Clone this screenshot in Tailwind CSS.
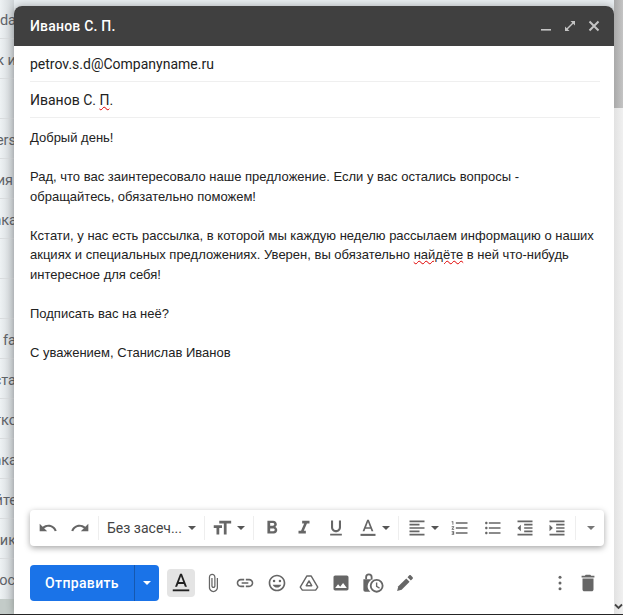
<!DOCTYPE html>
<html lang="ru">
<head>
  <meta charset="UTF-8">
  <title>Новое письмо</title>
  <script src="https://cdn.jsdelivr.net/npm/@tailwindcss/browser@4"></script>
</head>
<body class="w-[623px] h-[615px] overflow-hidden bg-[#e9eef1] font-['Roboto',sans-serif]">
  <div class="flex h-[614px]">

    <!-- Mail list behind the compose window -->
    <div class="w-[14px] h-[614px] flex flex-col overflow-hidden text-[14.5px] text-[#5f6368] bg-gradient-to-r from-[#eef2f4] to-[#cfd4d7]">
      <div class="h-[39px] pt-1 shrink-0 flex items-center justify-end whitespace-nowrap border-b border-[#d9dcde]"><span class="-mr-[2px]">da</span></div>
      <div class="h-10 pt-1 shrink-0 flex items-center justify-end whitespace-nowrap border-b border-[#d9dcde]"><span class="-mr-[2px]">к и</span></div>
      <div class="h-10 pt-1 shrink-0 border-b border-[#d9dcde]"></div>
      <div class="h-10 pt-1 shrink-0 flex items-center justify-end whitespace-nowrap border-b border-[#d9dcde]"><span class="-mr-[2px]">ers</span></div>
      <div class="h-10 pt-1 shrink-0 flex items-center justify-end whitespace-nowrap border-b border-[#d9dcde]"><span class="mr-[1px]">ия</span></div>
      <div class="h-10 pt-1 shrink-0 flex items-center justify-end whitespace-nowrap border-b border-[#d9dcde]"><span class="-mr-[3px]">ака</span></div>
      <div class="h-10 pt-1 shrink-0 border-b border-[#d9dcde]"></div>
      <div class="h-10 pt-1 shrink-0 border-b border-[#d9dcde]"></div>
      <div class="h-10 pt-1 shrink-0 flex items-center justify-end whitespace-nowrap border-b border-[#d9dcde]"><span class="-mr-[2px]">s fa</span></div>
      <div class="h-10 pt-1 shrink-0 flex items-center justify-end whitespace-nowrap border-b border-[#d9dcde]"><span class="-mr-[2px]">ста</span></div>
      <div class="h-10 pt-1 shrink-0 flex items-center justify-end whitespace-nowrap border-b border-[#d9dcde]"><span class="-mr-[3px]">тко</span></div>
      <div class="h-10 pt-1 shrink-0 flex items-center justify-end whitespace-nowrap border-b border-[#d9dcde]"><span class="-mr-[3px]">ака</span></div>
      <div class="h-10 pt-1 shrink-0 flex items-center justify-end whitespace-nowrap border-b border-[#d9dcde]"><span class="-mr-[3px]">йте</span></div>
      <div class="h-10 pt-1 shrink-0 flex items-center justify-end whitespace-nowrap border-b border-[#d9dcde]"><span class="-mr-[2px]">ик</span></div>
      <div class="h-10 pt-1 shrink-0 flex items-center justify-end whitespace-nowrap"><span class="-mr-[1px]">ос</span></div>
      <div class="flex-1 bg-[#c3cbc8]"></div>
    </div>

    <!-- Compose window -->
    <div class="w-[600px] mt-[6px] flex flex-col bg-white rounded-t-lg shadow-[0_0_8px_rgba(0,0,0,0.3)]">
      <div class="h-10 shrink-0 bg-[#404040] rounded-t-lg flex items-center pl-4 pr-3 text-white">
        <span class="font-medium text-[14px] tracking-[0.2px]">Иванов С. П.</span>
        <div class="ml-auto flex items-center gap-2 text-[#c4c4c4]">
          <svg class="w-4 h-4 block" viewBox="0 0 16 16" fill="currentColor"><rect x="3" y="11" width="10" height="1.6"/></svg>
          <svg class="w-4 h-4 block" viewBox="0 0 16 16" fill="currentColor"><path d="M8.5 3H13v4.5zM3 8.5V13h4.5z"/><path d="M4.5 11.5l7-7" stroke="currentColor" stroke-width="1.4"/></svg>
          <svg class="w-4 h-4 block" viewBox="0 0 16 16" fill="none" stroke="currentColor" stroke-width="2"><path d="M3.5 3.5l9 9M12.5 3.5l-9 9"/></svg>
        </div>
      </div>

      <div class="ml-4 mr-[14px] h-[36px] pt-[2px] shrink-0 flex items-center border-b border-[#efefef] text-[14px] text-[#222]">petrov.s.d@Companyname.ru</div>
      <div class="ml-4 mr-[14px] h-[36px] pt-[2px] shrink-0 flex items-center border-b border-[#efefef] text-[14px] text-[#222]">
        <span>Иванов С. <span class="underline decoration-wavy decoration-[#e00000] decoration-1">П</span>.</span>
      </div>

      <div class="flex-1 ml-4 mr-[14px] mt-[10px] font-['Liberation_Sans',sans-serif] text-[13px] leading-[19.5px] text-[#222]">
        <p>Добрый день!</p>
        <p class="mt-[19.5px]">Рад, что вас заинтересовало наше предложение. Если у вас остались вопросы -<br>обращайтесь, обязательно поможем!</p>
        <p class="mt-[19.5px]">Кстати, у нас есть рассылка, в которой мы каждую неделю рассылаем информацию о наших<br>акциях и специальных предложениях. Уверен, вы обязательно <span class="underline decoration-wavy decoration-[#e00000] decoration-1">найдёте</span> в ней что-нибудь<br>интересное для себя!</p>
        <p class="mt-[19.5px]">Подписать вас на неё?</p>
        <p class="mt-[19.5px]">С уважением, Станислав Иванов</p>
      </div>

      <!-- Formatting toolbar -->
      <div class="ml-4 mr-[10px] mb-[19px] h-9 shrink-0 flex items-center bg-white rounded-sm shadow-[0_2px_6px_rgba(0,0,0,0.35)] text-[#666]">
        <svg class="w-5 h-5 ml-[8px]" viewBox="0 0 24 24" fill="currentColor"><path d="M12.5 8c-2.65 0-5.05.99-6.9 2.6L2 7v9h9l-3.62-3.62c1.39-1.16 3.16-1.88 5.12-1.88 3.54 0 6.55 2.31 7.6 5.5l2.37-.78C21.08 11.03 17.15 8 12.5 8z"/></svg>
        <svg class="w-5 h-5 ml-3" viewBox="0 0 24 24" fill="currentColor"><path d="M18.4 10.6C16.55 8.99 14.15 8 11.5 8c-4.65 0-8.58 3.03-9.96 7.22L3.9 16c1.05-3.19 4.05-5.5 7.6-5.5 1.95 0 3.73.72 5.12 1.88L13 16h9V7l-3.6 3.6z"/></svg>
        <div class="w-px h-6 bg-[#eee] ml-2"></div>
        <span class="ml-2 text-[14px] text-[#444] w-[74px] whitespace-nowrap">Без засеч...</span>
        <div class="ml-[7px] w-0 h-0 border-x-[4px] border-x-transparent border-t-[4px] border-t-[#555]"></div>
        <div class="w-px h-6 bg-[#eee] ml-2"></div>
        <svg class="w-[22px] h-[22px] ml-[6px]" viewBox="0 0 24 24" fill="currentColor"><path d="M9 4v3h5v12h3V7h5V4H9zm-6 8h3v7h3v-7h3V9H3v3z"/></svg>
        <div class="ml-[4px] w-0 h-0 border-x-[4px] border-x-transparent border-t-[4px] border-t-[#555]"></div>
        <div class="w-px h-6 bg-[#eee] ml-2"></div>
        <svg class="w-[22px] h-[22px] ml-[7px]" viewBox="0 0 24 24" fill="currentColor"><path d="M15.6 10.79c.97-.67 1.65-1.77 1.65-2.79 0-2.26-1.75-4-4-4H7v14h7.04c2.09 0 3.71-1.7 3.71-3.79 0-1.52-.86-2.82-2.15-3.42zM10 6.5h3c.83 0 1.5.67 1.5 1.5s-.67 1.5-1.5 1.5h-3v-3zm3.5 9H10v-3h3.5c.83 0 1.5.67 1.5 1.5s-.67 1.5-1.5 1.5z"/></svg>
        <svg class="w-[22px] h-[22px] ml-[10px]" viewBox="0 0 24 24" fill="currentColor"><path d="M10 4v3h2.21l-3.42 8H6v3h8v-3h-2.21l3.42-8H18V4z"/></svg>
        <svg class="w-[20px] h-[20px] ml-[11px]" viewBox="0 0 24 24" fill="currentColor"><path d="M12 17c3.31 0 6-2.69 6-6V3h-2.5v8c0 1.93-1.57 3.5-3.5 3.5S8.5 12.93 8.5 11V3H6v8c0 3.31 2.69 6 6 6zm-7 2v2h14v-2H5z"/></svg>
        <svg class="w-[20px] h-[20px] ml-[12px]" viewBox="0 0 24 24" fill="currentColor"><path d="M11 2L5.5 16h2.25l1.12-3h6.25l1.12 3h2.25L13 2h-2zm-1.38 9L12 4.67 14.38 11H9.62z"/><rect x="3" y="19" width="18" height="2.5"/></svg>
        <div class="ml-[4px] w-0 h-0 border-x-[4px] border-x-transparent border-t-[4px] border-t-[#555]"></div>
        <div class="w-px h-6 bg-[#eee] ml-2"></div>
        <svg class="w-[20px] h-[20px] ml-[8px]" viewBox="0 0 24 24" fill="currentColor"><path d="M15 15H3v2h12v-2zm0-8H3v2h12V7zM3 13h18v-2H3v2zm0 8h18v-2H3v2zM3 3v2h18V3H3z"/></svg>
        <div class="ml-[4px] w-0 h-0 border-x-[4px] border-x-transparent border-t-[4px] border-t-[#555]"></div>
        <svg class="w-[20px] h-[20px] ml-[11px]" viewBox="0 0 24 24" fill="currentColor"><path d="M2 17h2v.5H3v1h1v.5H2v1h3v-4H2v1zm1-9h1V4H2v1h1v3zm-1 3h1.8L2 13.1v.9h3v-1H3.2L5 10.9V10H2v1zm5-6v2h14V5H7zm0 14h14v-2H7v2zm0-6h14v-2H7v2z"/></svg>
        <svg class="w-[20px] h-[20px] ml-[13px]" viewBox="0 0 24 24" fill="currentColor"><path d="M4 10.5c-.83 0-1.5.67-1.5 1.5s.67 1.5 1.5 1.5 1.5-.67 1.5-1.5-.67-1.5-1.5-1.5zm0-6c-.83 0-1.5.67-1.5 1.5S3.17 7.5 4 7.5 5.5 6.83 5.5 6 4.83 4.5 4 4.5zm0 12c-.83 0-1.5.68-1.5 1.5s.68 1.5 1.5 1.5 1.5-.68 1.5-1.5-.67-1.5-1.5-1.5zM7 19h14v-2H7v2zm0-6h14v-2H7v2zm0-8v2h14V5H7z"/></svg>
        <svg class="w-[20px] h-[20px] ml-[12px]" viewBox="0 0 24 24" fill="currentColor"><path d="M11 17h10v-2H11v2zm-8-5l4 4V8l-4 4zm0 9h18v-2H3v2zM3 3v2h18V3H3zm8 6h10V7H11v2zm0 4h10v-2H11v2z"/></svg>
        <svg class="w-[20px] h-[20px] ml-[12px]" viewBox="0 0 24 24" fill="currentColor"><path d="M3 21h18v-2H3v2zM3 8v8l4-4-4-4zm8 9h10v-2H11v2zM3 3v2h18V3H3zm8 6h10V7H11v2zm0 4h10v-2H11v2z"/></svg>
        <div class="w-px h-6 bg-[#eee] ml-2"></div>
        <div class="ml-[11px] w-0 h-0 border-x-[4px] border-x-transparent border-t-[4px] border-t-[#777]"></div>
      </div>

      <!-- Bottom actions -->
      <div class="ml-4 mr-[15px] mb-[13px] h-9 shrink-0 flex items-center text-[#666]">
        <div class="w-[129px] h-9 flex bg-[#1a73e8] rounded text-white">
          <span class="w-[104px] flex items-center justify-center font-medium text-[14px] tracking-[0.35px]">Отправить</span>
          <span class="flex-1 border-l border-[#1558b0] flex items-center justify-center">
            <span class="w-0 h-0 border-x-[4px] border-x-transparent border-t-[4px] border-t-white"></span>
          </span>
        </div>
        <div class="ml-2 w-7 h-7 bg-[#e4e4e4] rounded-sm flex items-center justify-center text-[#222]">
          <svg class="w-[22px] h-[22px]" viewBox="0 0 24 24" fill="currentColor"><path d="M11 2L5.5 16h2.25l1.12-3h6.25l1.12 3h2.25L13 2h-2zm-1.38 9L12 4.67 14.38 11H9.62z"/><rect x="3" y="19" width="18" height="2"/></svg>
        </div>
        <svg class="w-[20px] h-[20px] ml-2" viewBox="0 0 24 24" fill="currentColor"><path d="M16.5 6v11.5c0 2.21-1.79 4-4 4s-4-1.79-4-4V5c0-1.38 1.12-2.5 2.5-2.5s2.5 1.12 2.5 2.5v10.5c0 .55-.45 1-1 1s-1-.45-1-1V6H10v9.5c0 1.38 1.12 2.5 2.5 2.5s2.5-1.12 2.5-2.5V5c0-2.21-1.79-4-4-4S7 2.79 7 5v12.5c0 3.04 2.46 5.5 5.5 5.5s5.5-2.46 5.5-5.5V6h-1.5z"/></svg>
        <svg class="w-[20px] h-[20px] ml-3" viewBox="0 0 24 24" fill="currentColor"><path d="M3.9 12c0-1.71 1.39-3.1 3.1-3.1h4V7H7c-2.76 0-5 2.24-5 5s2.24 5 5 5h4v-1.9H7c-1.71 0-3.1-1.39-3.1-3.1zM8 13h8v-2H8v2zm9-6h-4v1.9h4c1.71 0 3.1 1.39 3.1 3.1s-1.39 3.1-3.1 3.1h-4V17h4c2.76 0 5-2.24 5-5s-2.24-5-5-5z"/></svg>
        <svg class="w-[20px] h-[20px] ml-3" viewBox="0 0 24 24" fill="currentColor"><path d="M11.99 2C6.47 2 2 6.48 2 12s4.47 10 9.99 10C17.52 22 22 17.52 22 12S17.52 2 11.99 2zM12 20c-4.42 0-8-3.58-8-8s3.58-8 8-8 8 3.58 8 8-3.58 8-8 8z"/><circle cx="15.5" cy="9.5" r="1.5"/><circle cx="8.5" cy="9.5" r="1.5"/><path d="M12 17.5c2.33 0 4.3-1.46 5.11-3.5H6.89c.81 2.04 2.78 3.5 5.11 3.5z"/></svg>
        <svg class="w-[20px] h-[20px] ml-3" viewBox="0 0 24 24" fill="none" stroke="currentColor" stroke-width="1.7" stroke-linejoin="round"><path d="M9.5 3.5h5L22.5 17l-2.5 3.5H4L1.5 17z"/><path d="M12 9.5l3.3 5.7H8.7z"/></svg>
        <svg class="w-[20px] h-[20px] ml-3" viewBox="0 0 24 24" fill="currentColor"><path d="M21 19V5c0-1.1-.9-2-2-2H5c-1.1 0-2 .9-2 2v14c0 1.1.9 2 2 2h14c1.1 0 2-.9 2-2zM8.5 13.5l2.5 3.01L14.5 12l4.5 6H5l3.5-4.5z"/></svg>
        <svg class="w-[22px] h-[22px] ml-[11px] -mr-px" viewBox="0 0 24 24" fill="currentColor"><path d="M3.5 8V5.5a4 4 0 0 1 8 0V8H9.5V5.5a2 2 0 0 0-4 0V8z"/><path d="M1.5 8h12.2A7.5 7.5 0 0 0 9.2 21.5H3.5a2 2 0 0 1-2-2z"/><path d="M16 7.5a7.5 7.5 0 1 0 0 15 7.5 7.5 0 0 0 0-15zm0 13a5.5 5.5 0 1 1 0-11 5.5 5.5 0 0 1 0 11z"/><path d="M15.2 11.5h1.5v3.9l2.8 1.6-.7 1.2-3.6-2.1z"/></svg>
        <svg class="w-[20px] h-[20px] ml-3" viewBox="0 0 24 24" fill="currentColor"><path d="M2.5 21.5l1.5-5.5 9.5-9.5 4 4-9.5 9.5z"/><path d="M15 5l2.2-2.2c.5-.5 1.2-.5 1.7 0l2.3 2.3c.5.5.5 1.2 0 1.7L19 9z"/></svg>
        <svg class="w-[20px] h-[20px] ml-auto mr-[7px]" viewBox="0 0 24 24" fill="currentColor"><circle cx="12" cy="5" r="1.8"/><circle cx="12" cy="12" r="1.8"/><circle cx="12" cy="19" r="1.8"/></svg>
        <svg class="w-[22px] h-[22px]" viewBox="0 0 24 24" fill="currentColor"><path d="M6 19c0 1.1.9 2 2 2h8c1.1 0 2-.9 2-2V7H6v12zM19 4h-3.5l-1-1h-5l-1 1H5v2h14V4z"/></svg>
      </div>
    </div>

    <!-- Page scrollbar -->
    <div class="w-[9px] h-[614px] flex flex-col bg-gradient-to-r from-[#e2e2e2] to-[#f0f0f0]">
      <div class="h-[108px] bg-gradient-to-r from-[#a9a9a9] to-[#c4c4c4]"></div>
      <svg class="mt-auto mb-[3px] w-[9px] h-[9px] text-[#444]" viewBox="0 0 9 9" fill="none" stroke="currentColor" stroke-width="1.8"><path d="M1 2.5l3.5 3.5L8 2.5"/></svg>
    </div>
  </div>
  <div class="h-px bg-[#2b2b2b]"></div>
</body>
</html>
